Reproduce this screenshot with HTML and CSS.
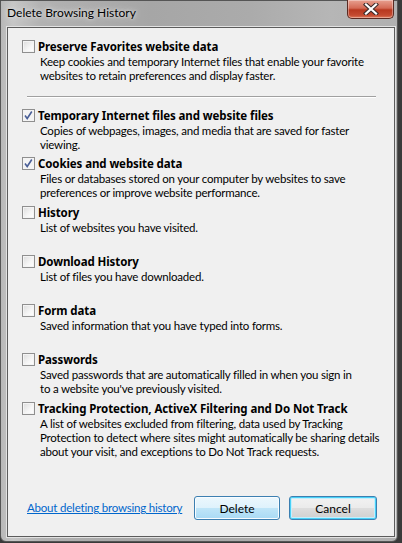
FILE: index.html
```html
<!DOCTYPE html>
<html>
<head>
<meta charset="utf-8">
<link rel="stylesheet" href="styles.css">
</head>
<body>
<div class="window">
  <div class="titlebar">
    <span class="title">Delete Browsing History</span>
    <div class="close">
      <svg width="20" height="12" viewBox="0 0 20 12">
        <path d="M5 1.5 L15 10.5 M15 1.5 L5 10.5" stroke="#3a2a2a" stroke-width="4.2" stroke-linecap="square"/>
        <path d="M5 1.5 L15 10.5 M15 1.5 L5 10.5" stroke="#ffffff" stroke-width="2.2" stroke-linecap="square"/>
      </svg>
    </div>
  </div>
  <div class="panel">
    <div class="item first">
      <div class="head"><span class="cb"></span><span class="label">Preserve Favorites website data</span></div>
      <div class="desc">Keep cookies and temporary Internet files that enable your favorite<br>websites to retain preferences and display faster.</div>
    </div>
    <div class="sep"></div>
    <div class="item second">
      <div class="head"><span class="cb checked"><svg width="11" height="11" viewBox="0 0 11 11"><path d="M2 5.5 L4.2 8.5 L8.8 1.5" fill="none" stroke="#4a5f97" stroke-width="1.6"/></svg></span><span class="label">Temporary Internet files and website files</span></div>
      <div class="desc">Copies of webpages, images, and media that are saved for faster<br>viewing.</div>
    </div>
    <div class="item">
      <div class="head"><span class="cb checked"><svg width="11" height="11" viewBox="0 0 11 11"><path d="M2 5.5 L4.2 8.5 L8.8 1.5" fill="none" stroke="#4a5f97" stroke-width="1.6"/></svg></span><span class="label">Cookies and website data</span></div>
      <div class="desc">Files or databases stored on your computer by websites to save<br>preferences or improve website performance.</div>
    </div>
    <div class="item">
      <div class="head"><span class="cb"></span><span class="label">History</span></div>
      <div class="desc">List of websites you have visited.</div>
    </div>
    <div class="item">
      <div class="head"><span class="cb"></span><span class="label">Download History</span></div>
      <div class="desc">List of files you have downloaded.</div>
    </div>
    <div class="item">
      <div class="head"><span class="cb"></span><span class="label">Form data</span></div>
      <div class="desc">Saved information that you have typed into forms.</div>
    </div>
    <div class="item">
      <div class="head"><span class="cb"></span><span class="label">Passwords</span></div>
      <div class="desc">Saved passwords that are automatically filled in when you sign in<br>to a website you've previously visited.</div>
    </div>
    <div class="item">
      <div class="head"><span class="cb"></span><span class="label">Tracking Protection, ActiveX Filtering and Do Not Track</span></div>
      <div class="desc">A list of websites excluded from filtering, data used by Tracking<br>Protection to detect where sites might automatically be sharing details<br>about your visit, and exceptions to Do Not Track requests.</div>
    </div>
    <div class="footer">
      <a class="link" href="#">About deleting browsing history</a>
      <div class="buttons">
        <button class="btn delete">Delete</button>
        <button class="btn cancel">Cancel</button>
      </div>
    </div>
  </div>
</div>
</body>
</html>
```

FILE: styles.css
```css
html, body {
  margin: 0;
  padding: 0;
  width: 402px;
  height: 543px;
  overflow: hidden;
  background: #3a3a3a;
}
.window {
  width: 398px;
  height: 542px;
  box-sizing: border-box;
  border: 1px solid #555;
  border-radius: 0 0 6px 6px;
  background: linear-gradient(90deg, #b8b8b8 0px, #c6c6c6 12px, #b2b2b2 40px, #a6a6a6 150px, #ababab 250px, #b6b6b6 330px, #b0b0b0 398px);
  display: flex;
  flex-direction: column;
  padding: 0 2px 4px 6px;
}
.titlebar {
  height: 26px;
  display: flex;
  align-items: flex-start;
  justify-content: space-between;
  font-family: Lato, "Noto Sans", sans-serif;
}
.title {
  font-size: 12px;
  color: #000;
  margin-top: 4px;
  margin-left: 0;
  text-shadow: 0 0 6px #e6e6e6, 0 0 3px #dddddd;
}
.close {
  width: 45px;
  height: 18px;
  margin-right: 1px;
  margin-top: -1px;
  border: 1px solid #5a2a22;
  border-top: none;
  border-radius: 0 0 5px 5px;
  background: linear-gradient(180deg, #e8a090 0%, #d46a55 45%, #b8381f 55%, #c44a30 85%, #e07b5c 100%);
  display: flex;
  align-items: center;
  justify-content: center;
  box-shadow: inset 0 0 0 1px rgba(255,255,255,0.35);
}
.panel {
  flex: 1;
  background: #f0f0f0;
  border: 1px solid #5c5c5c;
  box-shadow: 0 0 0 1px #e2e2e2;
  font-family: Lato, "Noto Sans", sans-serif;
  font-size: 11.5px;
  letter-spacing: -0.2px;
  color: #000;
  display: flex;
  flex-direction: column;
  padding: 11px 0 0 14px;
}
.item {
  height: 49px;
  display: flex;
  flex-direction: column;
}
.item.first {
  height: 57px;
}
.item.second {
  height: 48px;
}
.head {
  display: flex;
  align-items: center;
  height: 15px;
}
.cb {
  width: 11px;
  height: 11px;
  border: 1px solid #8f8f8f;
  background: linear-gradient(135deg, #dcdcdc 0%, #f6f6f6 60%, #ffffff 100%);
  box-shadow: inset 0 0 0 1px #f4f4f4;
  display: flex;
  align-items: center;
  justify-content: center;
  flex: none;
}
.cb.checked {
  background: #f4f4f4;
}
.label {
  font-family: "Noto Sans", sans-serif;
  font-weight: bold;
  margin-left: 3px;
  font-size: 11.5px;
  letter-spacing: -0.1px;
}
.desc {
  margin-left: 18px;
  line-height: 14px;
  margin-top: 1px;
  white-space: nowrap;
}
.sep {
  height: 1px;
  background: #a0a0a0;
  margin: 0 18px 10px 5px;
  border-bottom: 1px solid #ffffff;
}
.footer {
  margin-top: auto;
  height: 46px;
  display: flex;
  align-items: flex-start;
  justify-content: space-between;
  padding-right: 17px;
  padding-left: 5px;
}
.link {
  color: #0066cc;
  font-size: 11.5px;
  margin-top: 11px;
  white-space: nowrap;
}
.buttons {
  display: flex;
  gap: 9px;
  margin-top: 6px;
}
.btn {
  font-family: Lato, "Noto Sans", sans-serif;
  font-size: 12px;
  color: #000;
  height: 24px;
  border-radius: 3px;
  padding: 0;
}
.delete {
  width: 86px;
  border: 1px solid #3c7fb1;
  background: linear-gradient(180deg, #ecf7fd 0%, #dff2fc 48%, #bfe5f8 52%, #a9daf5 100%);
  box-shadow: inset 0 0 0 1px #f8fcff;
}
.cancel {
  width: 88px;
  border: 1px solid #3c7fb1;
  background: linear-gradient(180deg, #f2f2f2 0%, #ebebeb 48%, #dddddd 52%, #cfcfcf 100%);
  box-shadow: inset 0 0 0 1px #48d1f7, inset 0 0 0 2px #c5eefc;
}
```
